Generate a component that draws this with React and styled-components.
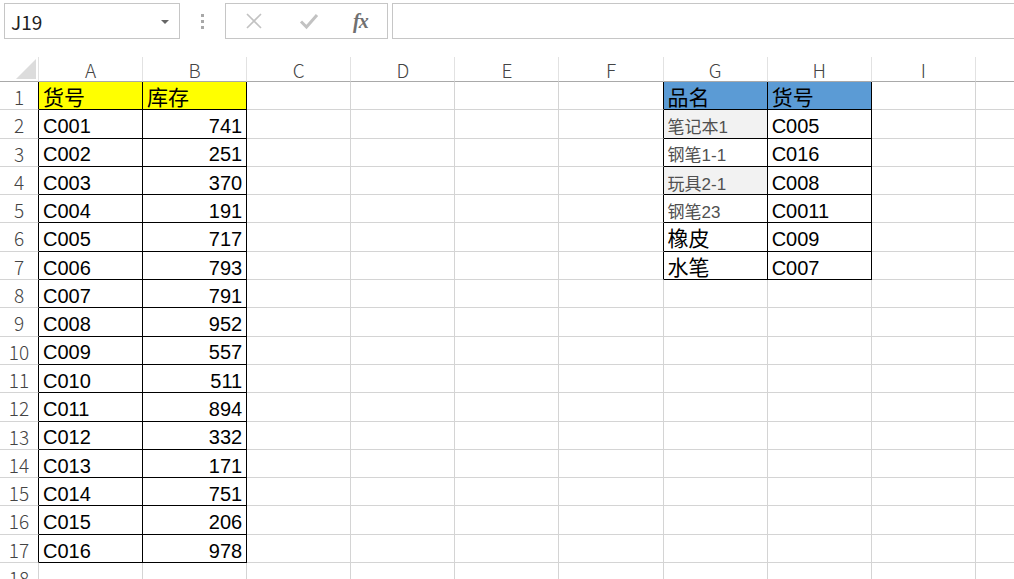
import React from "react";
import styled, { createGlobalStyle } from "styled-components";

const GlobalStyle = createGlobalStyle`
  html, body {
    margin: 0;
    padding: 0;
    height: 579px;
    overflow: hidden;
    background: #fff;
  }
  body {
    font-family: "Liberation Sans", "Noto Sans CJK SC", sans-serif;
    color: #000;
  }
`;

const COLS = ["A", "B", "C", "D", "E", "F", "G", "H", "I", "J"];
const ROW_COUNT = 19;

const colA = ["货号", "C001", "C002", "C003", "C004", "C005", "C006", "C007", "C008",
  "C009", "C010", "C011", "C012", "C013", "C014", "C015", "C016"];
const colB = ["库存", 741, 251, 370, 191, 717, 793, 791, 952, 557, 511, 894, 332, 171, 751, 206, 978];
const colG = ["品名", "笔记本1", "钢笔1-1", "玩具2-1", "钢笔23", "橡皮", "水笔"];
const colH = ["货号", "C005", "C016", "C008", "C0011", "C009", "C007"];

// r: 1-based row, c: 1-based column (A = 1)
function inTable(r, c) {
  if (r >= 1 && r <= 17 && (c === 1 || c === 2)) return true;
  if (r >= 1 && r <= 7 && (c === 7 || c === 8)) return true;
  return false;
}

function cellInfo(r, c) {
  if (c === 1 && r <= 17) return { value: colA[r - 1], fill: r === 1 ? "#ffff00" : null };
  if (c === 2 && r <= 17) {
    return { value: colB[r - 1], fill: r === 1 ? "#ffff00" : null, align: r === 1 ? "left" : "right" };
  }
  if (c === 7 && r <= 7) {
    const muted = r >= 2 && r <= 5;
    return {
      value: colG[r - 1],
      fill: r === 1 ? "#5b9bd5" : r === 2 || r === 4 ? "#f2f2f2" : null,
      size: muted ? 17 : null,
      muted,
    };
  }
  if (c === 8 && r <= 7) return { value: colH[r - 1], fill: r === 1 ? "#5b9bd5" : null };
  return { value: "" };
}

const isCjk = (v) => /[\u4e00-\u9fff]/.test(String(v)) && !/^[\u4e00-\u9fff]*\d/.test(String(v));

const Toolbar = styled.div`
  display: flex;
  align-items: flex-start;
  height: 39px;
  padding: 3px 0 0 4px;
  box-sizing: border-box;
`;

const NameBox = styled.div`
  width: 176px;
  height: 36px;
  box-sizing: border-box;
  border: 1px solid #c6c6c6;
  display: flex;
  align-items: center;
  justify-content: space-between;
  padding: 0 10px 0 6px;
  font-family: "Noto Sans CJK SC", sans-serif;
  font-size: 19px;
  color: #222;
`;

const Caret = styled.span`
  width: 0;
  height: 0;
  border-left: 4px solid transparent;
  border-right: 4px solid transparent;
  border-top: 4px solid #666;
  margin-top: 2px;
`;

const Grip = styled.div`
  width: 45px;
  height: 36px;
  display: flex;
  flex-direction: column;
  align-items: center;
  justify-content: center;
  gap: 3px;

  span {
    width: 3px;
    height: 3px;
    background: #a8a8a8;
  }
`;

const FxBox = styled.div`
  width: 163px;
  height: 36px;
  box-sizing: border-box;
  border: 1px solid #c6c6c6;
  display: grid;
  grid-template-columns: 55px 54px 1fr;
  align-items: center;
  padding-left: 10px;
`;

const FxButton = styled.span`
  display: flex;
  align-items: center;
  justify-content: center;
  width: 36px;
  height: 34px;
`;

const FxLabel = styled.span`
  font-family: "Liberation Serif", serif;
  font-style: italic;
  font-weight: bold;
  font-size: 20px;
  color: #707070;
  letter-spacing: -1px;
  padding-left: 8px;
`;

const FormulaInput = styled.div`
  flex: 1;
  height: 36px;
  box-sizing: border-box;
  border: 1px solid #c6c6c6;
  border-right: none;
  margin-left: 4px;
`;

const Viewport = styled.div`
  width: 100%;
  overflow: hidden;
  margin-top: 17.5px;
`;

const Sheet = styled.div`
  display: grid;
  width: max-content;
  grid-template-columns: 39px repeat(${COLS.length}, 104.1px);
  grid-template-rows: 25.5px repeat(${ROW_COUNT}, 28.3px);
`;

const Corner = styled.div`
  position: relative;
  border-right: 1px solid #e2e2e2;
  border-bottom: 1px solid #a9a9a9;
  box-sizing: border-box;
`;

const CornerMark = styled.svg`
  position: absolute;
  right: 2px;
  bottom: 2px;
`;

const ColHead = styled.div`
  box-sizing: border-box;
  border-right: 1px solid #e2e2e2;
  border-bottom: 1px solid #a9a9a9;
  display: flex;
  align-items: flex-end;
  justify-content: center;
  padding-bottom: 2.3px;
  font-family: "Noto Sans CJK SC", sans-serif;
  font-weight: 300;
  font-size: 19px;
  line-height: 1;
  color: #444;
`;

const RowHead = styled.div`
  box-sizing: border-box;
  border-right: 1px solid ${(p) => (p.$dark ? "#000" : "#d4d4d4")};
  border-bottom: 1px solid #d4d4d4;
  display: flex;
  align-items: flex-end;
  justify-content: center;
  padding-bottom: 3.3px;
  font-family: "Noto Sans CJK SC", sans-serif;
  font-weight: 300;
  font-size: 19px;
  line-height: 1;
  color: #444;
`;

const Cell = styled.div`
  box-sizing: border-box;
  min-width: 0;
  overflow: hidden;
  white-space: nowrap;
  background: ${(p) => p.$fill || "transparent"};
  border-right: 1px solid ${(p) => (p.$right ? "#000" : "#d4d4d4")};
  border-bottom: 1px solid ${(p) => (p.$bottom ? "#000" : "#d4d4d4")};
  display: flex;
  align-items: flex-end;
  justify-content: ${(p) => (p.$align === "right" ? "flex-end" : "flex-start")};
  padding: 0 4px 1.5px 4px;
  font-size: ${(p) => p.$size || 20}px;
  line-height: 1;
  color: ${(p) => (p.$muted ? "#505050" : "#000")};
`;

const XIcon = () => (
  <svg width="18" height="18" viewBox="0 0 18 18">
    <path d="M2 2 L16 16 M16 2 L2 16" stroke="#c2c2c2" strokeWidth="1.6" fill="none" />
  </svg>
);

const CheckIcon = () => (
  <svg width="20" height="18" viewBox="0 0 20 18">
    <path d="M2 9.5 L7.5 15 L18 3" stroke="#c2c2c2" strokeWidth="3" fill="none" />
  </svg>
);

export default function App() {
  const rows = [];
  for (let r = 1; r <= ROW_COUNT; r++) {
    rows.push(
      <RowHead key={`rh${r}`} $dark={inTable(r, 1)}>
        {r}
      </RowHead>
    );
    for (let c = 1; c <= COLS.length; c++) {
      const info = cellInfo(r, c);
      const cjk = info.size == null && isCjk(info.value);
      rows.push(
        <Cell
          key={`c${r}-${c}`}
          $fill={info.fill}
          $right={inTable(r, c) || inTable(r, c + 1)}
          $bottom={inTable(r, c) || inTable(r + 1, c)}
          $align={info.align}
          $size={info.size || (cjk ? 21 : null)}
          $muted={info.muted}
        >
          {info.value}
        </Cell>
      );
    }
  }

  return (
    <>
      <GlobalStyle />
      <Toolbar>
        <NameBox>
          J19
          <Caret />
        </NameBox>
        <Grip>
          <span />
          <span />
          <span />
        </Grip>
        <FxBox>
          <FxButton>
            <XIcon />
          </FxButton>
          <FxButton>
            <CheckIcon />
          </FxButton>
          <FxLabel>fx</FxLabel>
        </FxBox>
        <FormulaInput />
      </Toolbar>
      <Viewport>
        <Sheet>
          <Corner>
            <CornerMark width="20" height="20" viewBox="0 0 20 20">
              <polygon points="20,0 20,20 0,20" fill="#dcdcdc" />
            </CornerMark>
          </Corner>
          {COLS.map((c) => (
            <ColHead key={c}>{c}</ColHead>
          ))}
          {rows}
        </Sheet>
      </Viewport>
    </>
  );
}
